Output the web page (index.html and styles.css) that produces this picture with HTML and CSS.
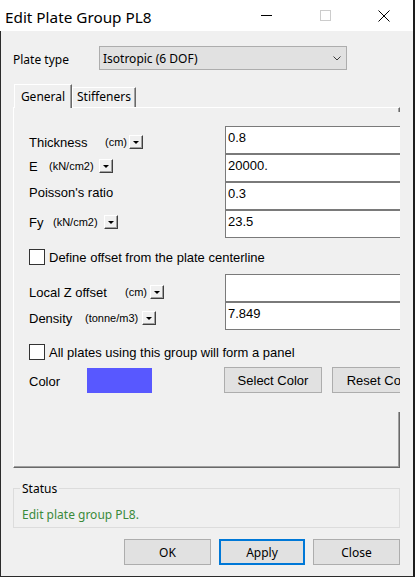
FILE: index.html
```html
<!DOCTYPE html>
<html>
<head>
<meta charset="utf-8">
<title>Edit Plate Group PL8</title>
<link rel="stylesheet" href="styles.css">
</head>
<body>
<div class="window">
  <div class="titlebar">
    <span class="title">Edit Plate Group PL8</span>
    <div class="caption">
      <span class="cap-btn cap-min"><svg width="11" height="11" viewBox="0 0 11 11"><path d="M0 5.5H11" stroke="#000" stroke-width="1"/></svg></span>
      <span class="cap-btn cap-max"><svg width="11" height="11" viewBox="0 0 11 11"><rect x="0.5" y="0.5" width="10" height="10" fill="none" stroke="#cccccc" stroke-width="1"/></svg></span>
      <span class="cap-btn cap-close"><svg width="12" height="12" viewBox="0 0 12 12"><path d="M0.5 0.5L11.5 11.5M11.5 0.5L0.5 11.5" stroke="#000" stroke-width="1"/></svg></span>
    </div>
  </div>
  <div class="client">
    <div class="type-row">
      <span class="type-label">Plate type</span>
      <div class="select"><span>Isotropic (6 DOF)</span><svg class="chev" width="8" height="5" viewBox="0 0 8 5"><path d="M0.5 0.5L4 4L7.5 0.5" stroke="#3c3c3c" fill="none" stroke-width="1"/></svg></div>
    </div>
    <div class="tabs">
      <span class="tab active">General</span>
      <span class="tab stiff">Stiffeners</span>
    </div>
    <div class="tabpanel">
      <div class="page">
        <div class="grid">
          <div class="lab r1"><span class="lbl">Thickness</span><span class="unit">(cm)</span><span class="drop"></span></div>
          <input class="field" value="0.8">
          <div class="lab r2"><span class="lbl">E</span><span class="unit">(kN/cm2)</span><span class="drop"></span></div>
          <input class="field" value="20000.">
          <div class="lab r3"><span class="lbl">Poisson's ratio</span></div>
          <input class="field" value="0.3">
          <div class="lab r4"><span class="lbl">Fy</span><span class="unit">(kN/cm2)</span><span class="drop"></span></div>
          <input class="field" value="23.5">
        </div>
        <div class="check"><span class="box"></span><span>Define offset from the plate centerline</span></div>
        <div class="grid grid2">
          <div class="lab r5"><span class="lbl">Local Z offset</span><span class="unit">(cm)</span><span class="drop"></span></div>
          <input class="field" value="">
          <div class="lab r6"><span class="lbl">Density</span><span class="unit">(tonne/m3)</span><span class="drop"></span></div>
          <input class="field" value="7.849">
        </div>
        <div class="check check2"><span class="box"></span><span>All plates using this group will form a panel</span></div>
        <div class="color-row">
          <div class="color-left"><span class="color-label">Color</span><span class="swatch"></span></div>
          <div class="btns"><span class="btn">Select Color</span><span class="btn">Reset Color</span></div>
        </div>
      </div>
    </div>
    <div class="status">
      <div class="legend">Status</div>
      <div class="status-msg">Edit plate group PL8.</div>
    </div>
    <div class="actions">
      <span class="abtn ok">OK</span>
      <span class="abtn apply">Apply</span>
      <span class="abtn close">Close</span>
    </div>
  </div>
</div>
</body>
</html>
```
FILE: styles.css
```css
* { box-sizing: border-box; }
body {
  margin: 0;
  background: #1d1d1d;
  font-family: "Noto Sans", sans-serif;
  font-size: 12px;
  color: #000;
}
.window {
  width: 413px;
  height: 577px;
  display: flex;
  flex-direction: column;
}
.titlebar {
  height: 31px;
  flex-shrink: 0;
  background: #fff;
  display: flex;
  align-items: center;
}
.title {
  padding: 2px 0 0 5px;
  font-size: 15.3px;
  line-height: 20px;
}
.caption {
  margin-left: auto;
  display: flex;
  height: 100%;
}
.cap-btn {
  display: flex;
  align-items: center;
  justify-content: center;
  height: 100%;
}
.cap-min { width: 57px; }
.cap-max { width: 60px; }
.cap-close { width: 58px; }

.client {
  flex: 1;
  background: #f0f0f0;
  border-left: 1px solid #2b2b2b;
  border-bottom: 1px solid #2b2b2b;
  padding: 15px 13px 0 12px;
}
.type-row {
  display: flex;
  align-items: center;
  height: 24px;
}
.type-label {
  width: 86px;
  padding-top: 3px;
}
.select {
  width: 248px;
  height: 24px;
  background: #e1e1e1;
  border: 1px solid #adadad;
  display: flex;
  align-items: center;
  padding: 0 5px 0 3px;
}
.chev { margin-left: auto; }

.tabs {
  display: flex;
  align-items: flex-end;
  height: 23px;
  margin-top: 14px;
  padding-left: 1px;
}
.tab {
  height: 20px;
  border-top: 1px solid #fff;
  border-left: 1px solid #fff;
  border-right: 1px solid #696969;
  box-shadow: inset -1px 0 #a0a0a0;
  display: flex;
  align-items: center;
  justify-content: center;
  padding-bottom: 3px;
}
.tab.active {
  width: 58px;
  height: 24px;
  margin-bottom: -1px;
  background: #f0f0f0;
  position: relative;
  z-index: 1;
  padding-bottom: 1px;
}
.tab.stiff { width: 64px; }

.tabpanel {
  height: 361px;
  border-top: 1px solid #fff;
  border-left: 1px solid #fff;
  border-right: 1px solid #696969;
  border-bottom: 1px solid #696969;
  box-shadow: inset -1px -1px #a0a0a0;
}
.page {
  margin: 4px -1px 0 0;
  height: 300px;
  overflow: hidden;
  background: #f0f0f0;
  padding: 14px 0 0 15px;
  font-family: "Liberation Sans", Arial, sans-serif;
  font-size: 13px;
}
.grid {
  display: grid;
  grid-template-columns: 196px 200px;
  grid-auto-rows: 28px;
}
.grid2 { margin-top: 9px; }
.lab {
  display: flex;
  align-items: center;
  height: 16px;
  align-self: start;
}
.unit { font-size: 11px; }
.r1 { margin-top: 8px; }
.r1 .lbl { width: 76px; }
.r1 .unit { width: 24px; }
.r2 { margin-top: 4px; }
.r2 .lbl { width: 20px; }
.r2 .unit { width: 50px; }
.r3 { margin-top: 2px; }
.r4 { margin-top: 4px; }
.r4 .lbl { width: 24px; }
.r4 .unit { width: 51px; }
.r5 { margin-top: 10px; }
.r5 .lbl { width: 96px; }
.r5 .unit { width: 25px; }
.r6 { margin-top: 8px; }
.r6 .lbl { width: 56px; }
.r6 .unit { width: 57px; }
.drop {
  width: 14px;
  height: 14px;
  flex-shrink: 0;
  background: #f0f0f0;
  border-top: 1px solid #fff;
  border-left: 1px solid #fff;
  border-right: 1px solid #404040;
  border-bottom: 1px solid #404040;
  box-shadow: inset -1px -1px #a0a0a0;
  display: flex;
  align-items: center;
  justify-content: center;
}
.drop::after {
  content: "";
  border-left: 3px solid transparent;
  border-right: 3px solid transparent;
  border-top: 3px solid #000;
  margin: 0 1px 0 0;
}
.field {
  display: block;
  width: 200px;
  height: 28px;
  margin: 0;
  border: 1px solid #7a7a7a;
  background: #fff;
  padding: 2px 2px 8px;
  font-family: "Liberation Sans", Arial, sans-serif;
  font-size: 13px;
  color: #000;
  outline: none;
}
.check {
  display: flex;
  align-items: center;
  gap: 4px;
  height: 16px;
  margin-top: 11px;
}
.check2 { margin-top: 14px; }
.box {
  width: 16px;
  height: 16px;
  flex-shrink: 0;
  border: 1px solid #333;
  background: #fff;
}
.color-row {
  display: grid;
  grid-template-columns: 196px 200px;
  height: 26px;
  margin-top: 7px;
}
.color-left {
  display: flex;
  align-items: center;
}
.color-label {
  width: 58px;
  padding-top: 3px;
}
.swatch {
  width: 65px;
  height: 25px;
  margin-top: 1px;
  background: #5858ff;
}
.btns {
  display: flex;
  gap: 10px;
  margin-left: -1px;
}
.btn {
  flex-shrink: 0;
  width: 98px;
  height: 26px;
  background: #e1e1e1;
  border: 1px solid #adadad;
  display: flex;
  align-items: center;
  justify-content: center;
  white-space: nowrap;
}

.status {
  margin-top: 20px;
  height: 40px;
  border: 1px solid #dcdcdc;
  padding-left: 8px;
}
.legend {
  width: max-content;
  margin: -8px 0 0 -2px;
  padding: 0 2px;
  line-height: 16px;
  background: #f0f0f0;
}
.status-msg {
  margin-top: 10px;
  line-height: 16px;
  color: #3a8a3a;
}
.actions {
  display: flex;
  justify-content: flex-end;
  gap: 8px;
  margin-top: 11px;
}
.abtn {
  height: 26px;
  width: 86px;
  background: #e1e1e1;
  border: 1px solid #adadad;
  display: flex;
  align-items: center;
  justify-content: center;
}
.abtn.ok { width: 87px; }
.abtn.close { width: 87px; }
.abtn.apply {
  border-color: #0078d7;
  box-shadow: inset 0 0 0 1px #0078d7;
}
```
